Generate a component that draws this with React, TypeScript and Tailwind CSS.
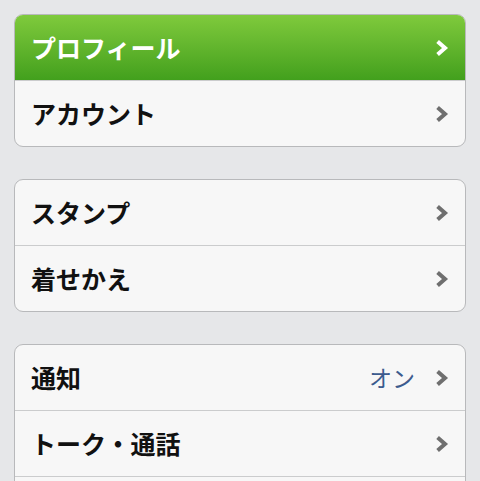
const FONT = "font-['Noto_Sans_CJK_JP','Noto_Sans',sans-serif]";

interface Row {
  label: string;
  value?: string;
  active?: boolean;
}

const GROUPS: Row[][] = [
  [{ label: "プロフィール", active: true }, { label: "アカウント" }],
  [{ label: "スタンプ" }, { label: "着せかえ" }],
  [{ label: "通知", value: "オン" }, { label: "トーク・通話" }, { label: "" }],
];

function Chevron({ white }: { white?: boolean }) {
  return (
    <svg width="14" height="18" viewBox="0 0 14 18" className="shrink-0">
      <path
        d="M2.6 2.6 L10 9 L2.6 15.4"
        fill="none"
        stroke={white ? "#ffffff" : "#6f6f6f"}
        strokeWidth="4"
      />
    </svg>
  );
}

export default function App() {
  return (
    <div className={`h-[481px] w-[480px] overflow-hidden bg-[#e6e7e9] px-[14px] pt-[14px] ${FONT}`}>
      <div className="flex flex-col gap-[32px]">
        {GROUPS.map((g, gi) => (
          <div
            key={gi}
            className="overflow-hidden rounded-[9px] border border-[#b8b9bb] bg-[#f7f7f7]"
          >
            {g.map((r, ri) => (
              <div
                key={ri}
                className={
                  "flex items-center pl-[16px] pr-[16px] " +
                  (ri > 0 ? "h-[66px] border-t border-[#cbcccd] " : "h-[65px] ") +
                  (r.active
                    ? "bg-gradient-to-b from-[#7fca3c] to-[#42a01d] text-white"
                    : "text-[#111]")
                }
              >
                <span className="flex-1 text-[25px] font-bold leading-none">{r.label}</span>
                {r.value && (
                  <span className="mr-[20px] text-[23px] leading-none text-[#3c5b8e]">{r.value}</span>
                )}
                {r.label && <Chevron white={r.active} />}
              </div>
            ))}
          </div>
        ))}
      </div>
    </div>
  );
}
